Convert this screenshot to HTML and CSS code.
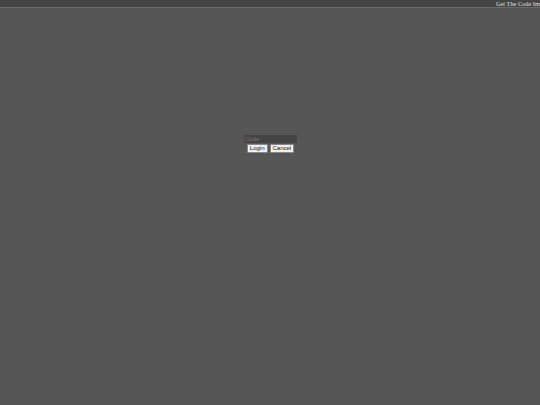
FILE: index.html
```html
<!DOCTYPE html>
<html>
<head>
<meta charset="utf-8">
<link rel="stylesheet" href="styles.css">
</head>
<body>
<div class="topbar"><span class="link">Get The Code Immediately</span></div>
<main class="stage">
  <form class="login">
    <input class="code" type="text" placeholder="Code">
    <div class="actions">
      <button type="button" class="btn">Login</button>
      <button type="button" class="btn">Cancel</button>
    </div>
  </form>
</main>
</body>
</html>
```
FILE: styles.css
```css
html, body { margin: 0; padding: 0; height: 100%; overflow: hidden; }
body { background: #565656; font-family: "Liberation Serif", serif; }
.topbar {
  height: 7px;
  background: #454545;
  border-bottom: 1px solid #6a6a6a;
  display: flex;
  justify-content: flex-start;
  padding-left: 496px;
  white-space: nowrap;
  overflow: hidden;
}
.link { color: #e0e0e0; font-size: 6.3px; line-height: 8px; }
.stage { display: flex; justify-content: center; padding-top: 127px; padding-left: 1px; }
.login { display: flex; flex-direction: column; align-items: center; gap: 1px; }
.code {
  width: 53px; height: 8px; box-sizing: border-box;
  background: #444; border: none; padding: 0 1px;
  font-family: "Liberation Sans", sans-serif; font-size: 6px; color: #ddd;
}
.code::placeholder { color: #777; }
.actions { display: flex; gap: 2px; }
.btn {
  font-family: "Liberation Sans", sans-serif; font-size: 6px;
  height: 9px; padding: 0 2px; line-height: 7px;
  background: #f0f0f0; color: #111; border: 1px solid #888; border-radius: 1px;
}
```
